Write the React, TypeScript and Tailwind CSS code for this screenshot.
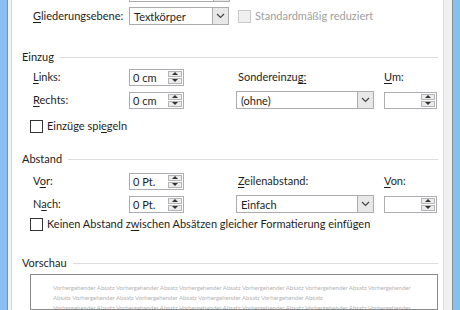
function Spinner({ value, className }: { value: string; className: string }) {
  return (
    <div className={`flex h-[17px] border border-[#abadb3] bg-white ${className}`}>
      <div className="flex flex-1 items-center pl-[3px] leading-none">{value}</div>
      <div className="my-[1px] mr-[1px] flex w-[14px] flex-col gap-[1px]">
        <div className="flex flex-1 items-center justify-center border border-[#b5b5b5] bg-[#ececec]">
          <div className="h-0 w-0 border-x-[3px] border-b-[3px] border-x-transparent border-b-[#333]" />
        </div>
        <div className="flex flex-1 items-center justify-center border border-[#b5b5b5] bg-[#ececec]">
          <div className="h-0 w-0 border-x-[3px] border-t-[3px] border-x-transparent border-t-[#333]" />
        </div>
      </div>
    </div>
  );
}

function Chevron() {
  return (
    <svg width="9" height="6" viewBox="0 0 9 6" fill="none">
      <path d="M1 1 L4.5 4.5 L8 1" stroke="#444" strokeWidth="1.2" />
    </svg>
  );
}

function Combo({ value, className }: { value: string; className: string }) {
  return (
    <div className={`flex h-[18px] border border-[#acacac] bg-white ${className}`}>
      <div className="flex flex-1 items-center pl-[4px] leading-none">{value}</div>
      <div className="flex w-[16px] items-center justify-center border-l border-[#acacac] bg-[#e8e8e8]">
        <Chevron />
      </div>
    </div>
  );
}

function Check({ label, disabled }: { label: React.ReactNode; disabled?: boolean }) {
  return (
    <div className="flex items-center gap-[4px]">
      <div
        className={`h-[13px] w-[13px] border ${
          disabled ? "border-[#c8c8c8] bg-[#f0f0f0]" : "border-[#333] bg-white"
        }`}
      />
      <span className={disabled ? "text-[#a0a0a0]" : ""}>{label}</span>
    </div>
  );
}

function Heading({ title, className }: { title: string; className: string }) {
  return (
    <div className={`flex h-[14px] items-center gap-[6px] pl-[10px] pr-[5px] ${className}`}>
      <span className="text-[#222]">{title}</span>
      <div className="h-px flex-1 bg-[#dcdcdc]" />
    </div>
  );
}

const U = ({ c }: { c: string }) => <span className="underline underline-offset-2">{c}</span>;

const previewLine1 =
  "Vorhergehender Absatz Vorhergehender Absatz Vorhergehender Absatz Vorhergehender Absatz Vorhergehender Absatz Vorhergehender";
const previewLine2 =
  "Absatz Vorhergehender Absatz Vorhergehender Absatz Vorhergehender Absatz Vorhergehender Absatz";

export default function App() {
  return (
    <div className="flex h-[310px] w-[460px] overflow-hidden bg-white font-['Lato',sans-serif] text-[11px] leading-[14px] text-[#1e1e1e]">
      {/* left window frame */}
      <div className="w-[7px] bg-[#86bff0]" />
      <div className="w-px bg-[#8d8d8d]" />
      <div className="w-[3px] bg-[#f0f0f0]" />
      <div className="w-px bg-[#d9d9d9]" />

      {/* dialog content */}
      <div className="flex w-[431px] flex-col">
        {/* bottom edge of the combobox above */}
        <div className="flex h-[7px] pl-[117px]">
          <div className="flex h-[2px] w-[101px] border-x border-b border-[#acacac]">
            <div className="flex-1" />
            <div className="w-[16px] border-l border-[#acacac] bg-[#e8e8e8]" />
          </div>
        </div>

        <div className="flex h-[18px] items-center">
          <div className="w-[117px] pl-[21px]">
            <U c="G" />
            liederungsebene:
          </div>
          <Combo value="Textkörper" className="w-[100px]" />
          <div className="pl-[9px]">
            <Check label="Standardmäßig reduziert" disabled />
          </div>
        </div>

        <Heading title="Einzug" className="mt-[25px]" />

        <div className="mt-[4px] flex h-[18px] items-center">
          <div className="w-[117px] pl-[21px]">
            <U c="L" />
            inks:
          </div>
          <Spinner value="0 cm" className="w-[55px]" />
          <div className="w-[52px]" />
          <div className="w-[148px] pl-[2px]">
            Sondereinzu
            <U c="g" />
            <U c=":" />
          </div>
          <div>
            <U c="U" />
            m:
          </div>
        </div>

        <div className="mt-[5px] flex h-[18px] items-center">
          <div className="w-[117px] pl-[21px]">
            <U c="R" />
            echts:
          </div>
          <Spinner value="0 cm" className="w-[55px]" />
          <div className="w-[52px]" />
          <Combo value="(ohne)" className="w-[138px]" />
          <div className="w-[10px]" />
          <Spinner value="" className="w-[53px]" />
        </div>

        <div className="mt-[9px] flex h-[16px] items-center pl-[18px]">
          <Check
            label={
              <>
                Einzüge spi
                <U c="e" />
                geln
              </>
            }
          />
        </div>

        <Heading title="Abstand" className="mt-[18px]" />

        <div className="mt-[6px] flex h-[18px] items-center">
          <div className="w-[117px] pl-[21px]">
            V<U c="o" />
            r:
          </div>
          <Spinner value="0 Pt." className="w-[55px]" />
          <div className="w-[52px]" />
          <div className="w-[148px] pl-[2px]">
            <U c="Z" />
            eilenabstand:
          </div>
          <div>
            <U c="V" />
            on:
          </div>
        </div>

        <div className="mt-[5px] flex h-[18px] items-center">
          <div className="w-[117px] pl-[21px]">
            N<U c="a" />
            ch:
          </div>
          <Spinner value="0 Pt." className="w-[55px]" />
          <div className="w-[52px]" />
          <Combo value="Einfach" className="w-[138px]" />
          <div className="w-[10px]" />
          <Spinner value="" className="w-[53px]" />
        </div>

        <div className="mt-[3px] flex h-[16px] items-center pl-[18px]">
          <Check
            label={
              <>
                Keinen Abstand z
                <U c="w" />
                ischen Absätzen gleicher Formatierung einfügen
              </>
            }
          />
        </div>

        <Heading title="Vorschau" className="mt-[24px]" />

        <div className="ml-[18px] mr-[5px] mt-[4px] flex-1 overflow-hidden border border-[#8a8a8a] px-[22px] pt-[8px] text-[6px] leading-[10px] text-[#b4b4b4]">
          <div className="whitespace-nowrap">{previewLine1}</div>
          <div className="whitespace-nowrap">{previewLine2}</div>
          <div className="whitespace-nowrap">{previewLine1}</div>
        </div>
      </div>

      {/* right window frame */}
      <div className="w-px bg-[#d9d9d9]" />
      <div className="w-[8px] bg-[#f0f0f0]" />
      <div className="w-px bg-[#8d8d8d]" />
      <div className="w-[7px] bg-[#86bff0]" />
    </div>
  );
}
